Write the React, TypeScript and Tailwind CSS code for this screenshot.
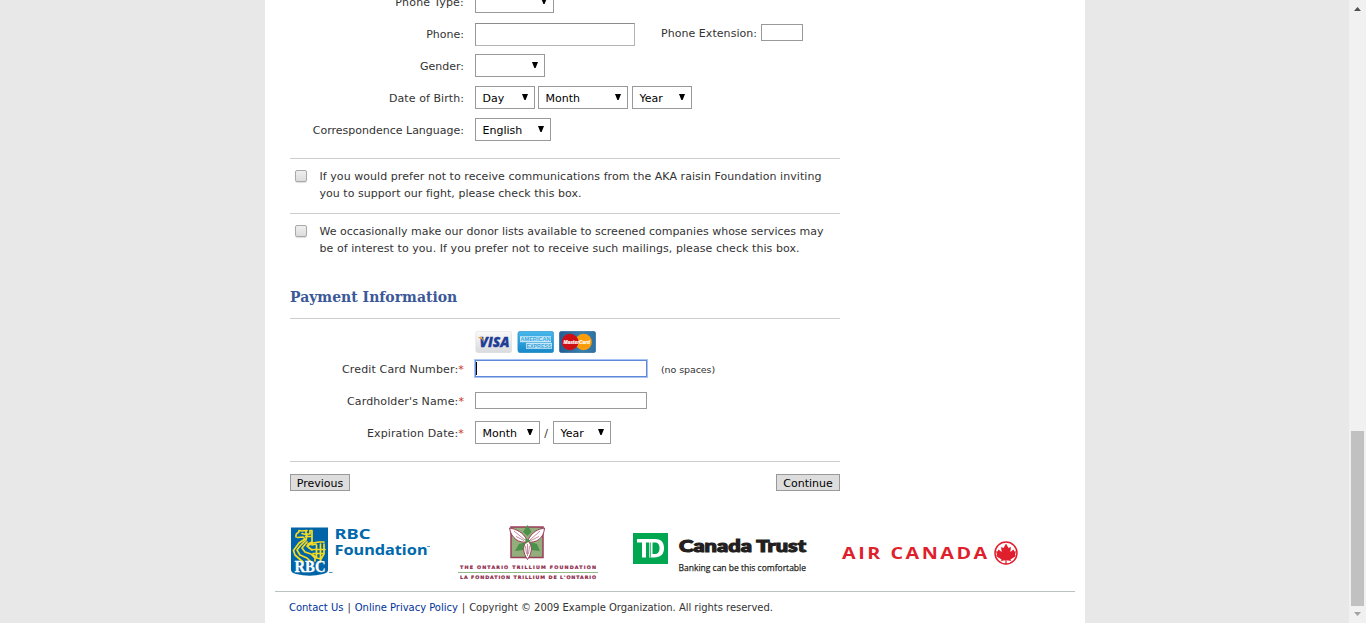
import type { ReactNode } from 'react';

function Row({ label, required, spacing = '', children }: { label: string; required?: boolean; spacing?: string; children: ReactNode }) {
  return (
    <div className="flex h-8 items-start">
      <div className={`mr-[11px] w-[174px] text-right leading-[34px] whitespace-nowrap ${spacing}`}>
        {label}
        {required && <span className="text-[#c8321e]">*</span>}
      </div>
      {children}
    </div>
  );
}

function Select({ text = '', width }: { text?: string; width: string }) {
  return (
    <div className={`mt-1 flex h-[23px] justify-between border border-[#999] bg-white pr-[6px] pl-[6.5px] text-black ${width}`}>
      <span className="leading-6">{text}</span>
      <svg className="mt-[7px] h-[6px] w-[6px]" viewBox="0 0 6 6">
        <path d="M0 0H6L3.600 6H2.400Z" />
      </svg>
    </div>
  );
}

function Consent({ lines }: { lines: { text: string; spacing: string }[] }) {
  return (
    <div className="flex h-[54px] pt-[9px]">
      <div className="mt-[2px] ml-[5px] h-3 w-3 rounded-[2px] border border-[#a9a9a9] bg-linear-to-b from-[#efefef] to-[#dcdcdc] shadow-[0_1px_1px_#ddd]" />
      <div className="ml-[12.5px] leading-[17px] whitespace-nowrap">
        {lines.map((l) => (
          <div key={l.text} className={l.spacing}>{l.text}</div>
        ))}
      </div>
    </div>
  );
}

function Cards() {
  return (
    <div className="ml-[185px] flex h-[22px] gap-[5px]">
      <svg width="37" height="22" viewBox="0 0 37 22">
        <defs>
          <linearGradient id="visa" x2="0" y2="1"><stop stopColor="#fafafa" /><stop offset="1" stopColor="#d9dadd" /></linearGradient>
        </defs>
        <rect x=".8" y=".3" width="35.8" height="21.4" rx="2.5" fill="url(#visa)" stroke="#dcdcdf" strokeWidth=".6" />
        <text x="4.500" y="16" fontFamily="Open Sans" fontSize="13.500" fontWeight="800" fontStyle="italic" textLength="30" lengthAdjust="spacingAndGlyphs" fill="#1e3d94" stroke="#1e3d94" strokeWidth=".3">VISA</text>
        <path d="M3.3 6H7L8.500 10.500Q7 7.5 3.3 6.7Z" fill="#f2a02c" />
      </svg>
      <svg width="37" height="22" viewBox="0 0 37 22">
        <defs>
          <linearGradient id="amex" x2="0" y2="1"><stop stopColor="#48b7ec" /><stop offset="1" stopColor="#1688c9" /></linearGradient>
        </defs>
        <rect x=".9" y=".3" width="35.8" height="21.4" rx="2.5" fill="url(#amex)" stroke="#2789bf" strokeWidth=".6" />
        <rect x="3" y="5.2" width="31" height="6" fill="#c6e8f8" />
        <rect x="9" y="11.8" width="26" height="6" fill="#c6e8f8" />
        <text x="3.5" y="10.4" fontFamily="Liberation Sans" fontSize="5.6" fontWeight="700" textLength="30" lengthAdjust="spacingAndGlyphs" fill="#37a6de">AMERICAN</text>
        <text x="9.5" y="17" fontFamily="Liberation Sans" fontSize="5.6" fontWeight="700" textLength="25" lengthAdjust="spacingAndGlyphs" fill="#37a0d8">EXPRESS</text>
      </svg>
      <svg width="37" height="22" viewBox="0 0 37 22">
        <defs>
          <linearGradient id="mc"><stop stopColor="#245c92" /><stop offset=".6" stopColor="#397fae" /><stop offset="1" stopColor="#2e70a2" /></linearGradient>
        </defs>
        <rect x=".3" y=".3" width="36.4" height="21.4" rx="2.5" fill="url(#mc)" stroke="#2a699b" strokeWidth=".6" />
        <circle cx="24.6" cy="11" r="8.3" fill="#ff9c0a" />
        <circle cx="11" cy="11" r="8.3" fill="#cc1016" />
        <path d="M17.8 6.3A8.3 8.3 0 0 1 17.8 15.7Z" fill="#cc1016" />
        <text x="4.5" y="13.2" fontFamily="Liberation Sans" fontSize="5.8" fontWeight="700" fontStyle="italic" textLength="26.5" lengthAdjust="spacingAndGlyphs" fill="#fff" stroke="#fff" strokeWidth=".2">MasterCard</text>
      </svg>
    </div>
  );
}

function RbcLogo() {
  return (
    <svg className="overflow-visible" width="142" height="52" viewBox="0 0 142 52">
      <path d="M1 1.500H38V44Q38 46.500 33 48Q19.500 51.500 6 48Q1 46.500 1 44Z" fill="#0065a8" />
      <g fill="none" stroke="#f8dc20" strokeWidth="1.7" strokeLinejoin="round" strokeLinecap="round">
        <path d="M6 11Q5.500 7.500 8.500 6.500L9 4.500L12 5L17 4.500M7.500 11.500L13 11L15 13L9 17L3.500 24.500L5 29L13 36" />
        <path d="M12 7.500L17 9L16 14L10 20L7 24L10 29L17 32L21 36" />
        <path d="M17 16L12 22L15 26L21 28L25 32L25 35" />
        <path d="M16 4.500V8H20V4.500H22V10.500H15.500M22 10.500V16L18 18V21L22 24M17 20L23 17L29 16H34" />
        <path d="M22 19L26 18M22 23.500H35M23 27.500H34M26.500 19V32M30.500 18V32M34 18V28L31 33L27 32L23 29M30.500 33V36" />
      </g>
      <text x="4.500" y="45.500" fontFamily="Liberation Serif" fontSize="16" fontWeight="700" textLength="31" lengthAdjust="spacingAndGlyphs" fill="#fff" stroke="#fff" strokeWidth=".3">RBC</text>
      <g fontFamily="Noto Sans" fontWeight="700" fill="#0069ac">
        <text x="44.500" y="13" fontSize="15" textLength="36" lengthAdjust="spacingAndGlyphs">RBC</text>
        <text x="44.500" y="28.500" fontSize="15" textLength="93" lengthAdjust="spacingAndGlyphs">Foundation</text>
        <path d="M137 20.500H140" stroke="#5a9fcb" strokeWidth="1" />
        <path d="M39 46.500H42.500" stroke="#4d94c4" strokeWidth="1" />
      </g>
    </svg>
  );
}

function TrilliumLogo() {
  return (
    <svg width="142" height="58" viewBox="0 0 142 58">
      <rect x="53" y="2" width="32" height="30.500" fill="#93ae7c" stroke="#9b3d58" strokeWidth="1.500" />
      <path d="M69.500 0L73.500 7L69.500 11L65 7ZM57 26L61 19L68 17L66 25ZM82 26L79 19L72 17L73 25Z" fill="#4c9149" />
      <g fill="#fff" stroke="#9b3d58" strokeWidth="1">
        <path d="M68 17C62 18 53 14 51.500 3C58 4 65 7 69 15Z" />
        <path d="M71 17C77 18 86 14 86.500 3C80 4 74 7 70 15Z" />
        <path d="M69 16C64 21 65 28 69.500 34.500C74 28 75 21 70 16Z" />
        <path d="M56 6L67 15M58 11.500L66 15.500M82 6L72 15M81 11.500L73 15.500M69.500 19V31M67.500 21L68.500 29M71.500 21L70.500 29" strokeWidth=".6" />
      </g>
      <path d="M67 13.500L73 15.500L68 18.500Z" fill="#4c9149" />
      <g fontFamily="DejaVu Sans" fontWeight="700" fontSize="4.800" fill="#8b2346" stroke="#8b2346" strokeWidth=".2">
        <text x="2" y="43.500" textLength="136">THE ONTARIO TRILLIUM FOUNDATION</text>
        <text x="2" y="53.800" textLength="136">LA FONDATION TRILLIUM DE L'ONTARIO</text>
      </g>
      <path d="M0 47.500H140" stroke="#93ba85" />
    </svg>
  );
}

function TdLogo() {
  return (
    <svg className="overflow-visible" width="176" height="44" viewBox="0 0 176 44">
      <rect width="35" height="31" fill="#00a650" />
      <path d="M4 6H22C29 6 31 10 31 15C31 21 28 24.500 21 24.500H16V9.500H13V24.500H9V9.500H4Z" fill="#fff" />
      <path d="M19.500 9.500H21.500C25 9.500 26.500 11.500 26.500 15C26.500 19 25 21 21.500 21H19.500Z" fill="#00a650" />
      <path d="M17.200 9.500V24.500" stroke="#00a650" strokeWidth="1" />
      <text x="46" y="19" fontFamily="Lato" fontSize="16.800" fontWeight="900" textLength="127" lengthAdjust="spacingAndGlyphs" fill="#231f20" stroke="#231f20" strokeWidth="1.1">Canada Trust</text>
      <text x="45.500" y="38" fontFamily="Open Sans" fontSize="9.300" textLength="127.500" lengthAdjust="spacingAndGlyphs" fill="#231f20" stroke="#231f20" strokeWidth=".25">Banking can be this comfortable</text>
    </svg>
  );
}

function AirCanadaLogo() {
  return (
    <svg width="180" height="26" viewBox="0 0 180 26">
      <text transform="scale(1.2 1)" x=".9" y="19" fontFamily="Open Sans" fontSize="16.500" fontWeight="700" textLength="121" fill="#e01f2d">AIR CANADA</text>
      <circle cx="165" cy="13" r="11" fill="none" stroke="#e01f2d" strokeWidth="1.500" />
      <path d="M165 3.500L167.500 8L170 7L169.300 12L172.500 9.500L173.500 11.500L175 11.300L174 15L175 16L169.500 19.500L170 21L165.600 20.300V24.500H164.400V20.300L160 21L160.500 19.500L155 16L156 15L155 11.300L156.500 11.500L157.500 9.500L160.700 12L160 7L162.500 8Z" fill="#e01f2d" />
    </svg>
  );
}

export default function App() {
  return (
    <div className="flex h-[623px] overflow-hidden bg-[#e8e8e8] font-['DejaVu_Sans',Verdana,sans-serif] text-[11px] text-[#333]">
      <main className="ml-[265px] h-[623px] w-[820px] shrink-0 bg-white">
        <div className="ml-[25px] w-[550px]">
          <div className="-mt-[14px]">
            <Row label="Phone Type:" spacing="tracking-[0.2px]"><Select width="w-[79px]" /></Row>
            <Row label="Phone:">
              <div className="mt-[5px] h-[23px] w-[160px] border border-[#b4b4b4] border-t-[#8c8c8c] border-l-[#999]" />
              <div className="ml-[26px] w-[100px] leading-8 tracking-[0.05px] whitespace-nowrap">Phone Extension:</div>
              <div className="mt-[6px] h-[17px] w-[42px] border border-[#999]" />
            </Row>
            <Row label="Gender:"><Select width="w-[70px]" /></Row>
            <Row label="Date of Birth:" spacing="tracking-[0.07px]">
              <div className="flex">
                <Select text="Day" width="w-[60px] mr-[3px]" />
                <Select text="Month" width="w-[90px] mr-1" />
                <Select text="Year" width="w-[60px]" />
              </div>
            </Row>
            <Row label="Correspondence Language:"><Select text="English" width="w-[76px]" /></Row>
          </div>

          <div className="mt-3 border-t border-[#ccc]">
            <Consent lines={[
              { text: 'If you would prefer not to receive communications from the AKA raisin Foundation inviting', spacing: 'tracking-[0.057px]' },
              { text: 'you to support our fight, please check this box.', spacing: 'tracking-[0.04px]' },
            ]} />
          </div>
          <div className="border-t border-[#ccc]">
            <Consent lines={[
              { text: 'We occasionally make our donor lists available to screened companies whose services may', spacing: 'tracking-[0.004px]' },
              { text: 'be of interest to you. If you prefer not to receive such mailings, please check this box.', spacing: 'tracking-[0.065px]' },
            ]} />
          </div>

          <h2 className="mt-5 h-[31px] border-b border-[#ccc] font-['DejaVu_Serif',Georgia,serif] text-[14px] leading-[18px] font-bold text-[#3b5998]">Payment Information</h2>

          <div className="pt-3">
            <Cards />
            <Row label="Credit Card Number:" required spacing="tracking-[0.15px]">
              <div className="mt-[7px] flex h-[17px] w-[172px] border border-[#5f88d6] shadow-[0_0_0_1px_#a8c4f7]">
                <div className="my-px w-px bg-black" />
              </div>
              <div className="ml-[14px] text-[9.5px] leading-[34px] tracking-[-0.1px]">(no spaces)</div>
            </Row>
            <Row label="Cardholder's Name:" required spacing="tracking-[0.12px]">
              <div className="mt-[7px] h-[17px] w-[172px] border border-[#999]" />
            </Row>
            <Row label="Expiration Date:" required spacing="tracking-[0.13px]">
              <Select text="Month" width="w-[65px]" />
              <span className="w-3 text-center leading-[34px]">/</span>
              <Select text="Year" width="ml-px w-[58px]" />
            </Row>
          </div>

          <div className="mt-3 flex justify-between border-t border-[#ccc] pt-3">
            <button className="h-[17px] w-[60px] border border-[#999] bg-[#ddd] pt-px leading-[15px] text-black">Previous</button>
            <button className="h-[17px] w-16 border border-[#999] bg-[#ddd] pt-px leading-[15px] text-black">Continue</button>
          </div>
        </div>

        <div className="ml-[25px] flex h-[100px] items-start pt-[35px]">
          <RbcLogo />
          <div className="-mt-px ml-[26px]"><TrilliumLogo /></div>
          <div className="mt-[7px] ml-[33px]"><TdLogo /></div>
          <div className="mt-[14px] ml-[32px]"><AirCanadaLogo /></div>
        </div>

        <footer className="mx-[10px] border-t border-[#b9c4c0] pl-[14px] text-[10px] leading-[32px] tracking-[-0.025px] whitespace-nowrap">
          <span className="text-[#039]">Contact Us</span>
          <span className="mx-[4px]">|</span>
          <span className="text-[#039]">Online Privacy Policy</span>
          <span className="mx-[4px]">|</span>
          <span>Copyright © 2009 Example Organization. All rights reserved.</span>
        </footer>
      </main>

      <aside className="ml-auto flex w-[17px] flex-col items-center bg-[#f1f1f1]">
        <svg className="mt-[7px] h-1 w-[7px]" viewBox="0 0 7 4"><path d="M0 4L3.500 0L7 4Z" fill="#505050" /></svg>
        <div className="mt-[420px] h-[175px] w-[13px] bg-[#c1c1c1]" />
        <svg className="mt-[6px] h-1 w-[7px]" viewBox="0 0 7 4"><path d="M0 0L3.500 4L7 0Z" fill="#a3a3a3" /></svg>
      </aside>
    </div>
  );
}
